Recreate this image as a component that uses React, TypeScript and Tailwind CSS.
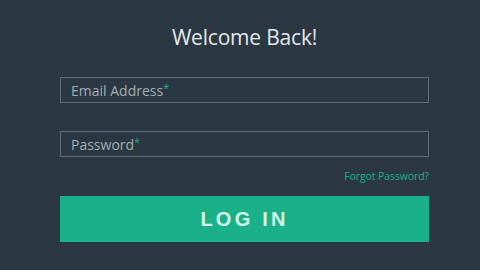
export default function App() {
  return (
    <div
      className="w-[480px] h-[270px] bg-[#2b3843] overflow-hidden"
      style={{ fontFamily: '"Open Sans", "Noto Sans", sans-serif' }}
    >
      <div className="ml-[60px] w-[369px] flex flex-col pt-[22px]">
        <h1 className="text-center text-[21px] leading-[30px] text-[#e4e8ea] font-normal tracking-[-0.2px]">
          Welcome Back!
        </h1>

        <div className="mt-[25px] h-[26px] border border-[#5e6d77] flex items-center px-[10px]">
          <span className="text-[14px] text-[#a3adb2]">
            Email Address<span className="text-[#1ab188] text-[11px] align-top">*</span>
          </span>
        </div>

        <div className="mt-[28px] h-[26px] border border-[#5e6d77] flex items-center px-[10px]">
          <span className="text-[14px] text-[#a3adb2]">
            Password<span className="text-[#1ab188] text-[11px] align-top">*</span>
          </span>
        </div>

        <div className="mt-[12px] flex justify-end">
          <a className="text-[10.5px] leading-[14px] text-[#1ab188] tracking-[-0.1px]">Forgot Password?</a>
        </div>

        <button
          className="mt-[13px] h-[46px] bg-[#1ab188] text-[#d3f6ea] text-[20px] font-bold tracking-[3.2px] flex items-center justify-center"
          style={{ fontFamily: '"Liberation Sans", Arial, sans-serif' }}
        >
          LOG IN
        </button>
      </div>
    </div>
  );
}
